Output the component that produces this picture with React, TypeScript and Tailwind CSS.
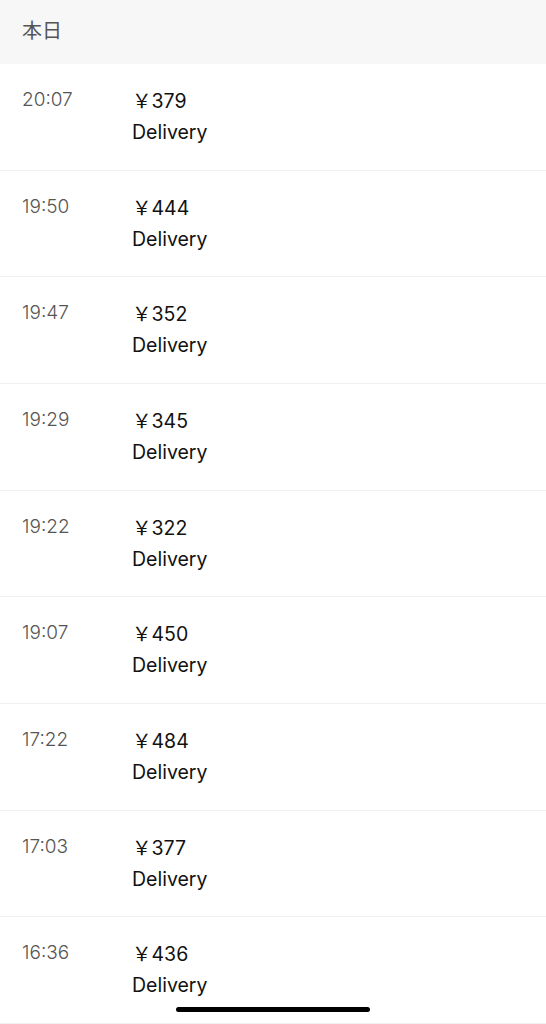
import React from "react";

const rows = [
  ["20:07", "379"],
  ["19:50", "444"],
  ["19:47", "352"],
  ["19:29", "345"],
  ["19:22", "322"],
  ["19:07", "450"],
  ["17:22", "484"],
  ["17:03", "377"],
  ["16:36", "436"],
];

export default function App() {
  return (
    <div
      className="relative w-[546px] h-[1024px] overflow-hidden bg-white"
      style={{ fontFamily: "Inter, 'Noto Sans CJK JP', sans-serif" }}
    >
      <div className="h-[64px] bg-[#f7f7f7] flex items-center pl-[22px] text-[20px] text-[#555] pb-[2px]">
        本日
      </div>
      {rows.map(([t, a]) => (
        <div
          key={t}
          className="h-[106.67px] border-b border-[#f2f2f2] flex pt-[20px] box-border"
        >
          <div className="w-[132px] pl-[22px] text-[19px] leading-[31px] font-light text-[#555]">
            {t}
          </div>
          <div className="text-[19.5px] leading-[31px] text-[#111]">
            <div>
              <span style={{ fontFamily: "'Noto Sans CJK JP', sans-serif" }}>￥</span>
              {a}
            </div>
            <div>Delivery</div>
          </div>
        </div>
      ))}
      <div className="absolute left-[176px] top-[1007px] w-[194px] h-[5px] rounded-full bg-black" />
    </div>
  );
}
